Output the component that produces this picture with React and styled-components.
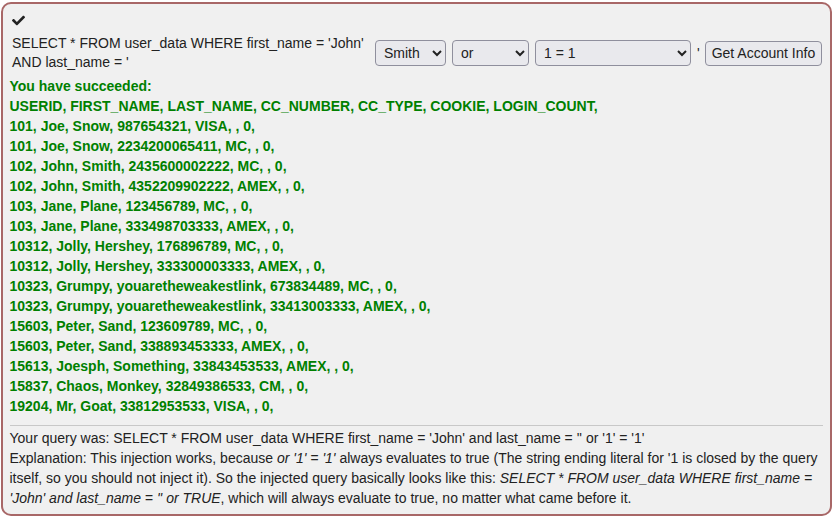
import styled, { createGlobalStyle } from 'styled-components'
import { FaCheck } from 'react-icons/fa'

const GlobalStyle = createGlobalStyle`
  body {
    margin: 0;
    background: #ffffff;
    font-family: "Liberation Sans", Arial, sans-serif;
    font-size: 14px;
    color: #222;
  }
`

const Card = styled.div`
  margin: 2px 3px 2px 1px;
  border: 2px solid #a86767;
  border-radius: 10px;
  background: #f0f0f0;
  padding: 8px 7px 8px 6.5px;
  height: 514px;
  box-sizing: border-box;
`

const Status = styled.div`
  height: 22px;
  padding: 2px 0 0 2px;
  box-sizing: border-box;

  svg {
    width: 13px;
    height: 13px;
    color: #222;
  }
`

const QueryForm = styled.form`
  display: flex;
  align-items: center;
  gap: 6px;
  padding: 0 0 0 2.5px;
`

const QueryText = styled.div`
  width: 357px;
  line-height: 19px;
  color: #222;
`

const Select = styled.select`
  width: ${p => p.$w}px;
  height: 26px;
  font-family: "Liberation Sans", Arial, sans-serif;
  font-size: 14px;
  color: #222;
  background: #e9e9ed;
  border: 1px solid #8f8f9d;
  border-radius: 4px;
  padding: 0 4px;
`

const Quote = styled.span`
  margin: 0 -1px 0 0;
`

const Button = styled.button`
  height: 25px;
  white-space: nowrap;
  font-family: "Liberation Sans", Arial, sans-serif;
  font-size: 14px;
  color: #222;
  background: #e9e9ed;
  border: 1px solid #8f8f9d;
  border-radius: 4px;
  padding: 0 6px;
`

const Output = styled.div`
  margin-top: 4px;
  color: #008000;
  font-weight: bold;
  line-height: 20px;
`

const Rule = styled.hr`
  border: none;
  border-top: 1px solid #c8c8c8;
  margin: 9px 0 0 0;
`

const Explain = styled.div`
  margin-top: 2px;
  line-height: 20px;
  color: #222;

  em {
    font-style: italic;
  }
`

const rows = [
  'USERID, FIRST_NAME, LAST_NAME, CC_NUMBER, CC_TYPE, COOKIE, LOGIN_COUNT,',
  '101, Joe, Snow, 987654321, VISA, , 0,',
  '101, Joe, Snow, 2234200065411, MC, , 0,',
  '102, John, Smith, 2435600002222, MC, , 0,',
  '102, John, Smith, 4352209902222, AMEX, , 0,',
  '103, Jane, Plane, 123456789, MC, , 0,',
  '103, Jane, Plane, 333498703333, AMEX, , 0,',
  '10312, Jolly, Hershey, 176896789, MC, , 0,',
  '10312, Jolly, Hershey, 333300003333, AMEX, , 0,',
  '10323, Grumpy, youaretheweakestlink, 673834489, MC, , 0,',
  '10323, Grumpy, youaretheweakestlink, 33413003333, AMEX, , 0,',
  '15603, Peter, Sand, 123609789, MC, , 0,',
  '15603, Peter, Sand, 338893453333, AMEX, , 0,',
  '15613, Joesph, Something, 33843453533, AMEX, , 0,',
  '15837, Chaos, Monkey, 32849386533, CM, , 0,',
  '19204, Mr, Goat, 33812953533, VISA, , 0,',
]

const App = () => {
  return (
    <>
      <GlobalStyle />
      <Card>
        <Status><FaCheck /></Status>
        <QueryForm onSubmit={e => e.preventDefault()}>
          <QueryText>
            SELECT * FROM user_data WHERE first_name = 'John' AND last_name = '
          </QueryText>
          <Select $w={71} defaultValue="Smith">
            <option>Smith</option>
            <option>Smith' or</option>
          </Select>
          <Select $w={77} defaultValue="or">
            <option>or</option>
            <option>and</option>
          </Select>
          <Select $w={156} defaultValue="1 = 1">
            <option>1 = 1</option>
            <option>1 = 2</option>
          </Select>
          <Quote>'</Quote>
          <Button type="submit">Get Account Info</Button>
        </QueryForm>
        <Output>
          You have succeeded:
          {rows.map((r, i) => <div key={i}>{r}</div>)}
        </Output>
        <Rule />
        <Explain>
          Your query was: SELECT * FROM user_data WHERE first_name = 'John' and last_name = '' or '1' = '1'
          <br />
          Explanation: This injection works, because <em>or '1' = '1'</em> always evaluates to true (The string ending literal for '1 is closed by the query itself, so you should not inject it). So the injected query basically looks like this: <em>SELECT * FROM user_data WHERE first_name = 'John' and last_name = '' or TRUE</em>, which will always evaluate to true, no matter what came before it.
        </Explain>
      </Card>
    </>
  )
}

export default App
